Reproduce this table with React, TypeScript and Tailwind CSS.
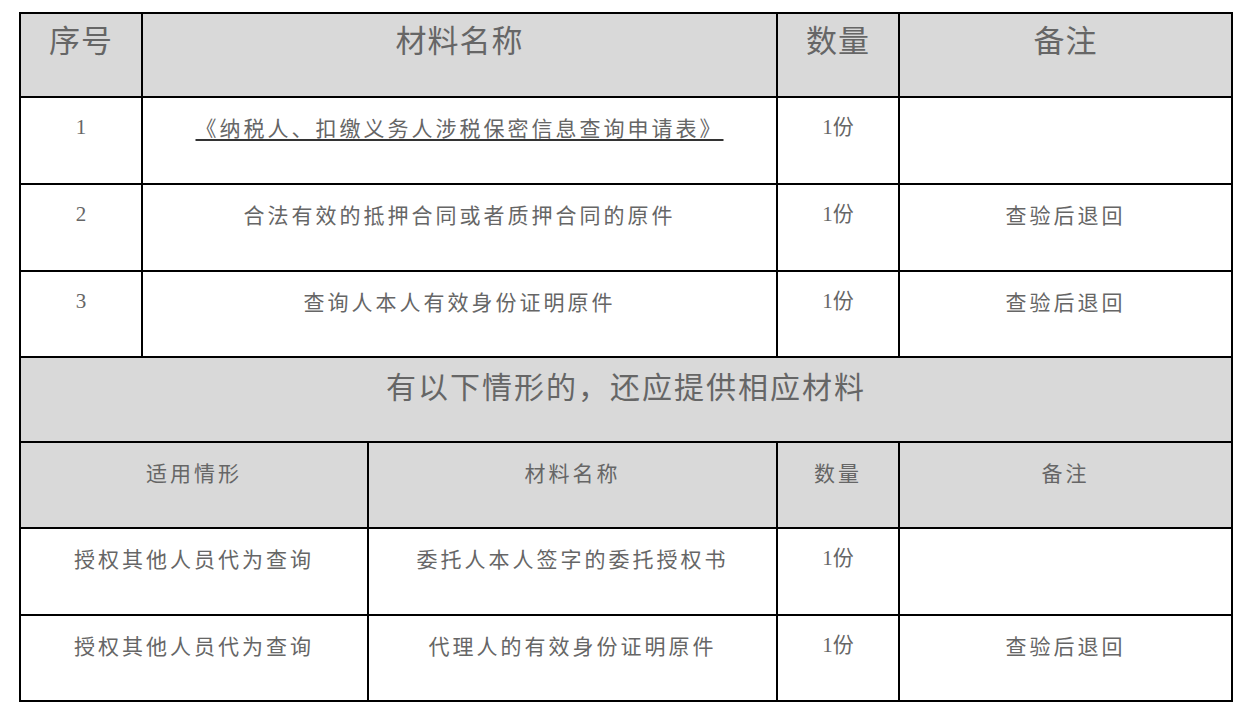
import React from "react";

const sans = "font-['Noto_Sans_CJK_SC','Noto_Sans',sans-serif]";

export default function App() {
  const cell = "border-2 border-black align-top text-center";
  const body = `${cell} pt-[15px] text-[21px] tracking-[3px] leading-[28px]`;
  const head = `${cell} pt-[5px] text-[31px] tracking-[1px] leading-[40px]`;
  const num = "font-['Liberation_Serif','Noto_Sans_CJK_SC',serif] tracking-normal";
  return (
    <div className={`w-[1250px] h-[721px] bg-white pt-[12px] pl-[19px] ${sans} text-[#666666]`}>
      <table className="border-collapse table-fixed w-[1212px]">
        <colgroup>
          <col className="w-[122px]" />
          <col className="w-[226px]" />
          <col className="w-[409px]" />
          <col className="w-[122px]" />
          <col className="w-[333px]" />
        </colgroup>
        <tbody>
          <tr className="h-[84px] bg-[#d9d9d9]">
            <td className={head}>序号</td>
            <td colSpan={2} className={head}>材料名称</td>
            <td className={head}>数量</td>
            <td className={head}>备注</td>
          </tr>
          <tr className="h-[87px]">
            <td className={`${body} ${num}`}>1</td>
            <td colSpan={2} className={body}>
              <span className="underline underline-offset-[3px] decoration-[2px] decoration-[#333333]">《纳税人、扣缴义务人涉税保密信息查询申请表》</span>
            </td>
            <td className={`${body} ${num}`}>1份</td>
            <td className={body}></td>
          </tr>
          <tr className="h-[87px]">
            <td className={`${body} ${num}`}>2</td>
            <td colSpan={2} className={body}>合法有效的抵押合同或者质押合同的原件</td>
            <td className={`${body} ${num}`}>1份</td>
            <td className={body}>查验后退回</td>
          </tr>
          <tr className="h-[86px]">
            <td className={`${body} ${num}`}>3</td>
            <td colSpan={2} className={body}>查询人本人有效身份证明原件</td>
            <td className={`${body} ${num}`}>1份</td>
            <td className={body}>查验后退回</td>
          </tr>
          <tr className="h-[85px] bg-[#d9d9d9]">
            <td colSpan={5} className={`${cell} pt-[7px] text-[30px] tracking-[2px] leading-[40px]`}>
              有以下情形的，还应提供相应材料
            </td>
          </tr>
          <tr className="h-[86px] bg-[#d9d9d9]">
            <td colSpan={2} className={body}>适用情形</td>
            <td className={body}>材料名称</td>
            <td className={body}>数量</td>
            <td className={body}>备注</td>
          </tr>
          <tr className="h-[87px]">
            <td colSpan={2} className={body}>授权其他人员代为查询</td>
            <td className={body}>委托人本人签字的委托授权书</td>
            <td className={`${body} ${num}`}>1份</td>
            <td className={body}></td>
          </tr>
          <tr className="h-[86px]">
            <td colSpan={2} className={body}>授权其他人员代为查询</td>
            <td className={body}>代理人的有效身份证明原件</td>
            <td className={`${body} ${num}`}>1份</td>
            <td className={body}>查验后退回</td>
          </tr>
        </tbody>
      </table>
    </div>
  );
}
